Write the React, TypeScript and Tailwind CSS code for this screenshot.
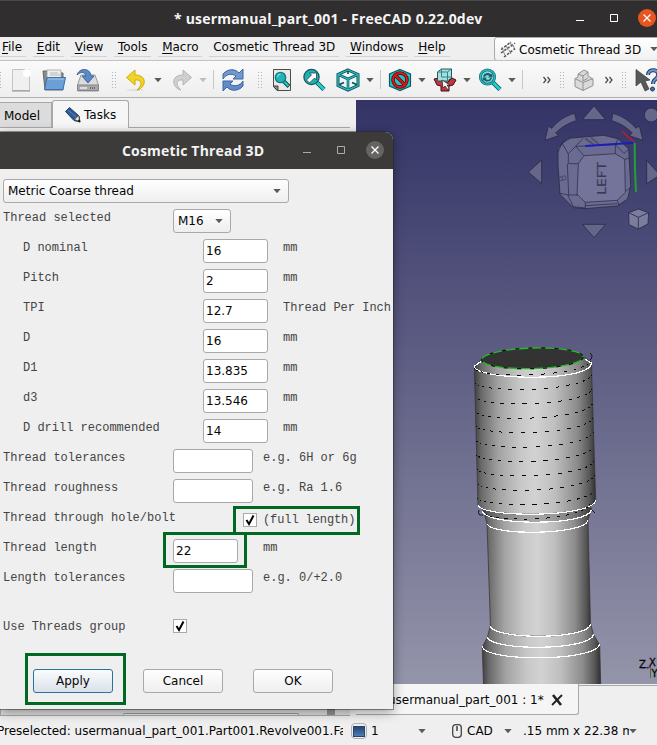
import React from "react";

function Arrow({ className = "", color = "#5a5a5a" }: { className?: string; color?: string }) {
  return (
    <svg className={`h-2 w-2 shrink-0 ${className}`} viewBox="0 0 8 8">
      <path d="M.3 2h7.400L4 6.200z" fill={color} />
    </svg>
  );
}

function Grip({ className = "" }: { className?: string }) {
  const ys = [0, 3, 6, 9, 12, 15];
  return (
    <svg className={`h-4 w-1 shrink-0 ${className}`} viewBox="0 0 4 16" shapeRendering="crispEdges">
      {ys.map((y) => (
        <g key={y} fill="#b4b4b4">
          <rect x="0" y={y} width="1" height="1" />
          <rect x="3" y={y} width="1" height="1" />
        </g>
      ))}
    </svg>
  );
}

function Sep({ className = "" }: { className?: string }) {
  return <div className={`h-[19px] w-px shrink-0 bg-[#c8c8c8] ${className}`} />;
}

function Icon({ className = "", children }: { className?: string; children: React.ReactNode }) {
  return (
    <svg className={`h-6 w-6 shrink-0 ${className}`} viewBox="0 0 24 24">
      {children}
    </svg>
  );
}

function More({ className = "" }: { className?: string }) {
  return (
    <svg className={`h-2 w-2 shrink-0 ${className}`} viewBox="0 0 8 8" fill="none" stroke="#444" strokeWidth="1.2">
      <path d="M.5 1 3 4 .5 7M4.5 1 7 4 4.5 7" />
    </svg>
  );
}

function Toolbar() {
  return (
    <div className="flex h-[38px] items-center overflow-hidden border-b border-t border-b-[#b0b0b0] border-t-[#c2c2c2] bg-linear-to-b from-[#fafafa] to-[#eeeeee] pt-px">
      <div className="w-[9px] shrink-0">
        <Grip className="-ml-[3px]" />
      </div>
      <Icon>
        <path d="M3.5 1.5h17v21h-17z" fill="#f0f0f0" stroke="#c4c4c4" />
        <circle cx="18" cy="5" r="4" fill="#fff" />
        <path d="M3 23h18" stroke="#8d8d8d" />
      </Icon>
      <Icon className="ml-[9px]">
        <path d="M1 3h8l2 2h10v17H3z" fill="#898989" stroke="#666" />
        <path d="M5 2h14v8H5z" fill="#eee" stroke="#999" strokeWidth=".7" />
        <path d="M8 5h8M8 7h10" stroke="#aaa" strokeWidth=".8" />
        <path d="M5 9.5h18.5L21 21.5H2.5z" fill="#6c9fd6" stroke="#3e6fae" />
        <path d="M6 11h16" stroke="#a5c6eb" />
      </Icon>
      <Icon className="ml-[10px]">
        <path d="M5 7h14l3.500 10v6h-21v-6z" fill="#dcdcdc" stroke="#9a9a9a" />
        <path d="M1.500 17h21v5.500h-21z" fill="#a9a9a9" stroke="#858585" />
        <path d="M4 20h7" stroke="#ddd" strokeWidth="2" />
        <path d="M14 20h6" stroke="#666" strokeDasharray="1 1" strokeWidth="2" />
        <path d="M1 7C3 0 14-1 15 8h3l-6 7-6-7h4C9 4 5 3 1 7z" fill="#5a8bc6" stroke="#3a659e" />
      </Icon>
      <Grip className="ml-3" />
      <Icon className="ml-2">
        <path d="M11 2 2.5 9.5 11 17v-5c7-1 8 5 2 10 9-2 11-15-2-15z" fill="#f1d42a" stroke="#d3ae00" />
        <ellipse cx="11" cy="22" rx="9" ry="1.2" fill="#0001" />
      </Icon>
      <Arrow className="ml-[6px]" />
      <Icon className="ml-2">
        <path d="m13 2 8.5 7.5L13 17v-5c-7-1-8 5-2 10C2 20 0 7 13 7z" fill="#cfcfcf" stroke="#b5b5b5" />
      </Icon>
      <Arrow className="ml-[5px]" color="#bdbdbd" />
      <Sep className="ml-[6px]" />
      <Icon className="ml-[7px]">
        <path d="M2 11V6c5-6 13-5 16-1l4-4v10H12l3-3C11 5 5 6 2 11z" fill="#7199cf" stroke="#3c669f" />
        <path d="M22 13v5c-5 6-13 5-16 1l-4 4V13h10l-3 3c4 3 10 2 13-3z" fill="#5f8cc8" stroke="#3c669f" />
      </Icon>
      <Grip className="ml-[13px]" />
      <Icon className="ml-2">
        <path d="M3.500 1.500h17v21H7l-3.500-4z" fill="#e9e9e6" stroke="#4c4c4c" />
        <path d="M3 18h5v5z" fill="#888" stroke="#444" />
        <path d="m13.500 13 5.500 5.500" stroke="#104b50" strokeWidth="4" />
        <path d="m13.500 13 5 5" stroke="#1ccbd0" strokeWidth="2" />
        <circle cx="10.500" cy="9.500" r="5.200" fill="#22b3b8" stroke="#117a80" strokeWidth="1.300" />
        <path d="M7.500 9a3.500 3.500 0 0 1 3-3" fill="none" stroke="#7fe3e6" strokeWidth="1.200" />
      </Icon>
      <Icon className="ml-2">
        <path d="m15 14.500 7 7" stroke="#14555b" strokeWidth="4.500" />
        <path d="m15 14.500 7 7" stroke="#1fd0d5" strokeWidth="2.600" />
        <circle cx="9.500" cy="9" r="7.600" fill="#1fb0b5" stroke="#17585e" strokeWidth="1.300" />
        <path d="m4.500 12 5-5-2-2h7v7l-2-2-5 5z" fill="#fff" stroke="#23464a" strokeWidth=".8" />
      </Icon>
      <Icon className="ml-[10px]">
        <path d="M12 2 22 6.500v11L12 22 2 17.500v-11z" fill="#eef7f7" stroke="#0f4a50" strokeWidth="3" />
        <path d="M2 6.500 12 11l10-4.500M12 11v11" fill="none" stroke="#0f4a50" strokeWidth="2.600" />
        <path d="M12 2v4M2.500 17 8 14.500M21.500 17 16 14.500" stroke="#0f4a50" strokeWidth="1.600" />
        <path d="M12 2 22 6.500v11L12 22 2 17.500v-11zM2 6.500 12 11l10-4.500M12 11v11" fill="none" stroke="#24c3c8" strokeWidth="1.300" />
      </Icon>
      <Arrow className="ml-[6px]" />
      <Sep className="ml-[6px]" />
      <Icon className="ml-[7px]">
        <path d="M12 1.500 22.500 6v12L12 22.500 1.500 18V6z" fill="#1fc3c8" stroke="#155a60" strokeWidth="1.200" />
        <circle cx="12" cy="12" r="7" fill="none" stroke="#4b0808" strokeWidth="3.400" />
        <path d="m7 7 10 10" stroke="#4b0808" strokeWidth="3.400" />
        <circle cx="12" cy="12" r="7" fill="none" stroke="#d81919" strokeWidth="2" />
        <path d="m7 7 10 10" stroke="#d81919" strokeWidth="2" />
      </Icon>
      <Arrow className="ml-[6px]" />
      <Icon className="ml-[7px]">
        <path d="m1 11 5-1 4 4h5l4-4 4 2-3 5-4 1v5H8v-5l-4-1z" fill="#c9343a" stroke="#3a1215" />
        <path d="m4.500 4 4-3h10v9l-4 3h-10z" fill="#a6dfe0" stroke="#235b61" />
        <path d="M4.500 4h10v9M14.500 4l4-3M8.500 1v8h10" fill="none" stroke="#2f8589" />
        <path d="m9 12 1 8 2-2 3 4 1-2-2-3h3z" fill="#f5f5f5" stroke="#303030" strokeWidth=".8" />
      </Icon>
      <Arrow className="ml-[6px]" />
      <Icon className="ml-[7px]">
        <path d="m15 14.500 7 7" stroke="#14555b" strokeWidth="4.500" />
        <path d="m15 14.500 7 7" stroke="#1fd0d5" strokeWidth="2.600" />
        <circle cx="9.500" cy="9" r="7.200" fill="#8fd9db" stroke="#14757b" strokeWidth="2.800" />
        <circle cx="9.500" cy="9" r="7.200" fill="none" stroke="#26bcc1" strokeWidth="1.300" />
        <path d="M5 8.500c1-4 6-4.500 8-2l1.500-1.500v4.500H10l1.500-1.500c-2-1.500-4-1-4.500 1zM14 10c-1 4-6 4.500-8 2l-1.300 1.300V9.500H9L7.700 11c2 1.500 4 1 4.500-1z" fill="#13646a" />
      </Icon>
      <Arrow className="ml-[6px]" />
      <Sep className="ml-[6px]" />
      <More className="ml-5" />
      <Grip className="ml-[9px]" />
      <Icon className="ml-2">
        <path d="M3 10.500v8L11 22.500l10-5V11l-5-3V4l-4-2-6 4v3z" fill="#dadada" stroke="#909090" />
        <path d="m6 6 5 2 5-4M11 8v5M11 13l5-3M3 10.500l8 4 10-4M11 14.500v8" fill="none" stroke="#909090" />
      </Icon>
      <More className="ml-[9px]" />
      <Grip className="ml-[9px]" />
      <Icon className="ml-[9px]">
        <path d="M1 1.500 15 12l-5 1 4 8-4 2-4-9-5 4z" fill="#555a58" stroke="#363b39" strokeWidth=".7" />
        <path d="M13 7c0-7 12-6 10 1-1.500 4-5 3-5 8" fill="none" stroke="#1f3c6b" strokeWidth="4" />
        <path d="M13 7c0-7 12-6 10 1-1.500 4-5 3-5 8" fill="none" stroke="#6f97cf" strokeWidth="2" />
        <circle cx="17.500" cy="21" r="2" fill="#426ca8" stroke="#1f3c6b" />
      </Icon>
    </div>
  );
}

const menus = ["File", "Edit", "View", "Tools", "Macro", "Cosmetic Thread 3D", "Windows", "Help"];

function MenuBar() {
  return (
    <div className="flex h-[23px] overflow-hidden bg-[#efefef]">
      <div className="-ml-0.5 flex h-5 w-[497px] shrink-0 gap-[6.7px]">
        {menus.map((m) => (
          <div key={m} className="whitespace-nowrap border-b border-[#d2d2d2] px-1 leading-5">
            {m.startsWith("Cos") ? m : (
              <>
                <span className="underline decoration-1 underline-offset-2">{m[0]}</span>
                {m.slice(1)}
              </>
            )}
          </div>
        ))}
      </div>
      <div className="-ml-px flex h-6 w-[180px] shrink-0 items-center rounded-[3px] border border-[#a9a9a9] bg-linear-to-b from-white to-[#f1f1f1] pl-[5px] whitespace-nowrap">
        <svg className="mr-[3px] h-[17px] w-4" viewBox="0 0 16 17" fill="none" stroke="#565656">
          <path d="M1 8.500 11 1M1 12 15 2M4 16 15 7.500" strokeDasharray="2.500 1.500" strokeWidth="1.500" />
          <path d="m2 6 2 6m2-8 2 5m2-8 2 5M4 12l2 4m3-7 2 4m2-9 2 5" strokeWidth=".7" />
        </svg>
        <span className="pt-px">Cosmetic Thread 3D</span>
        <Arrow className="ml-[9px]" />
      </div>
    </div>
  );
}

function helixPath() {
  const out: string[] = [];
  for (let turn = 0; turn < 11; turn++) {
    const cx = 533 + turn * 0.35;
    const y0 = 368 + turn * 14.4;
    const r = turn === 10 ? 53 : 58.5;
    for (let a = 0.05 + (turn % 3) * 0.04; a < 3.1; a += 0.208) {
      const pt = (t: number) =>
        `${(cx - r * Math.cos(t)).toFixed(1)} ${(y0 + 11 * Math.sin(t) - 8.5 * (t / Math.PI)).toFixed(1)}`;
      out.push(`M${pt(a)}L${pt(Math.min(a + 0.072, 3.14))}`);
    }
  }
  return out.join("");
}

function Viewport() {
  return (
    <svg className="block h-[584px] w-[301px]" viewBox="356 100 301 584">
      <defs>
        <linearGradient id="sky" x1="0" y1="0" x2="0" y2="1">
          <stop offset="0" stopColor="#333366" />
          <stop offset="1" stopColor="#9494aa" />
        </linearGradient>
        <linearGradient id="metal">
          <stop offset="0" stopColor="#3f3f3f" />
          <stop offset=".06" stopColor="#6b6b6b" />
          <stop offset=".2" stopColor="#a3a3a3" />
          <stop offset=".38" stopColor="#c8c8c8" />
          <stop offset=".5" stopColor="#d2d2d2" />
          <stop offset=".66" stopColor="#bfbfbf" />
          <stop offset=".85" stopColor="#8b8b8b" />
          <stop offset=".95" stopColor="#565656" />
          <stop offset="1" stopColor="#303030" />
        </linearGradient>
      </defs>
      <rect x="356" y="100" width="301" height="584" fill="url(#sky)" />

      <g transform="translate(510 95) scale(.33333)" stroke="#292944" strokeWidth="2.500" fill="#66668b" strokeLinejoin="round">
        <path d="m252 33 35 41h-70zM252 428l35-40h-70zM55 231l40-36v71zM450 240l-40-44v70z" />
        <path d="M194 55c-28 7-52 24-69 45l-10-7-10 43 41-14-9-8c18-18 36-29 62-37zM308 55c28 7 52 24 70 45l10-7 11 43-41-14 9-8c-18-18-36-29-62-37z" />
        <circle cx="424" cy="60" r="21" />
        <path d="M144 160 173 130 281 121 324 131 356 162 362 272 353 312 322 333 225 341 190 338 150 298 144 210z" fill="#6b6b91" />
        <path d="M222 181 316 176 344 193 346 292 322 316 226 322 201 303 205 206z" fill="#74749a" stroke="none" />
        <path
          d="M222 182 316 176M205 206 201 303M344 193 346 290M226 322 322 316M175 206h30l17-24-25-28-22 22zM172 206l4 94h27l23 22v17l-36-4-17-35M144 172l12-28 19 33M197 154l22-24M156 144l25-14M197 154l119-5 26 26M316 149v27l28 17 14-4M324 131l-8 18M346 290l15-12M346 292l-24 24 5 16M226 332l96-6M176 300l-26-5M342 175l14-12"
          fill="none"
          strokeWidth="2.200"
        />
        <text x="0" y="0" transform="translate(288 299) rotate(-90)" className="font-['DejaVu_Sans'] text-[38px]" fill="#3a3a56" stroke="#3a3a56" strokeWidth=".5" textLength="98" lengthAdjust="spacingAndGlyphs">LEFT</text>
        <text x="0" y="0" transform="translate(168 258) rotate(-90) skewX(12)" className="font-['DejaVu_Sans'] text-[30px]" fill="#484866" stroke="none">B</text>
        <path d="m226 130 25 19M242 127l24 20" stroke="#50506d" strokeWidth="6" />
        <path d="m356 353 29-11 31 11-2 34-29 15-28-13z" fill="#7c7c9e" />
        <path d="m356 353 29 14 31-14M385 367v34" fill="none" />
        <g fill="none">
          <path d="m226 153 146-10" stroke="#1d1dba" strokeWidth="6" />
          <path d="m336 109 36 32" stroke="#b51d31" strokeWidth="5" />
          <path d="m374 143 1 80 3 68" stroke="#23a033" strokeWidth="6" />
        </g>
      </g>

      <path d="M482.500 508 487 523 490.500 627 494 640H588L590.500 625 588 520 591.500 508z" fill="url(#metal)" stroke="#383838" strokeWidth=".8" />
      <path d="M482.500 508V511.500C488 526 587 526 591.500 510V504z" fill="#3334" />
      <path d="M490.300 626 487.300 637.500 482.300 647 483.500 685h117.200l-1-40-6.200-10.500L590.700 624C588 640 494 640 490.300 626z" fill="url(#metal)" stroke="#383838" strokeWidth=".8" />
      <path d="M481.500 359 474.500 366v9l3.500 130C481 518 592 518 595.700 500.500l-4-128v-10l-7-5z" fill="url(#metal)" stroke="#383838" strokeWidth=".8" />
      <ellipse cx="532.500" cy="358.300" rx="50.800" ry="10.300" transform="rotate(-1.600 533 358)" fill="#333" stroke="#28b828" strokeWidth="1.300" />
      <ellipse cx="532.500" cy="358.300" rx="50.800" ry="10.300" transform="rotate(-1.600 533 358)" fill="none" stroke="#111" strokeWidth="1.300" strokeDasharray="4 9" />
      <g fill="none" stroke="#fff" strokeWidth="1.200" shapeRendering="crispEdges">
        <path d="M481 361.500l-6.500 4.500C473 380 590 383 591.500 363l-6-3.500" />
        <path d="M478 505C481 518 592 518 595.700 500.500" />
        <path d="M482.500 511.500C488 526 587 526 591.500 510" />
        <path d="M487 524C492 536 584 535 588 520.500" />
        <path d="M490.300 626C494 640 588 640 590.700 624" />
        <path d="M487.300 637.500C492 651 590 651 593.500 634.500" />
        <path d="M482.300 646.500C485 662 596 662 599.800 644" />
      </g>
      <path d={helixPath()} stroke="#080808" strokeWidth="1" fill="none" shapeRendering="crispEdges" />
      <path d="M590 353q4 3 0 7M479 510q-2 6 4 5M592 510l3 3" fill="none" stroke="#111" />

      <g className="font-['DejaVu_Sans'] text-[10px]" fill="#050505" stroke="#050505" strokeWidth=".3">
        <path d="m642 668 9-1" stroke="#2626a8" strokeWidth="1" />
        <path d="M650.500 668v10" stroke="#1e8b30" strokeWidth="1" />
        <path d="m647 669 4-3" stroke="#a22" strokeWidth="1" />
        <text x="639" y="668">Z</text>
        <text x="649" y="666">X</text>
        <text x="651.500" y="677">Y</text>
      </g>
    </svg>
  );
}

function Field({ value = "", className }: { value?: string; className: string }) {
  return (
    <div className={`flex h-6 shrink-0 items-center rounded-[3px] border border-[#a9a9a9] bg-white pl-0.5 ${className}`}>{value}</div>
  );
}

function Mono({ children, className = "-top-[3px]" }: { children: React.ReactNode; className?: string }) {
  return (
    <span className={`relative whitespace-pre font-['Liberation_Mono',monospace] text-[12px] text-[#444] ${className}`}>
      {children}
    </span>
  );
}

function Check() {
  return (
    <div className="flex h-3.5 w-3.5 shrink-0 items-center justify-center border border-[#aaa] bg-white">
      <svg className="h-3 w-3" viewBox="0 0 12 12" fill="none" stroke="#000" strokeWidth="2">
        <path d="m2.500 6 2.500 4L9.500 1.500" />
      </svg>
    </div>
  );
}

const dims: [string, string, string][] = [
  ["D nominal", "16", "mm"],
  ["Pitch", "2", "mm"],
  ["TPI", "12.7", "Thread Per Inch"],
  ["D", "16", "mm"],
  ["D1", "13.835", "mm"],
  ["d3", "13.546", "mm"],
  ["D drill recommended", "14", "mm"],
];

const specs: [string, string][] = [
  ["Thread tolerances", "e.g. 6H or 6g"],
  ["Thread roughness", "e.g. Ra 1.6"],
];

function Row({ label, hint }: { label: string; hint: string }) {
  return (
    <div className="flex h-[30px] items-center">
      <Mono className="-top-[3px] w-[170px]">{label}</Mono>
      <Field className="w-20" />
      <Mono className="-top-[3px] ml-2.5">{hint}</Mono>
    </div>
  );
}

function Button({ label, primary = false }: { label: string; primary?: boolean }) {
  return (
    <div
      className={`flex h-6 w-20 items-center justify-center rounded-[3px] border bg-linear-to-b ${
        primary ? "border-[#2d71a0] from-[#fafcfd] to-[#d9e1e9]" : "border-[#a9a9a9] from-white to-[#eeeeee]"
      }`}
    >
      {label}
    </div>
  );
}

function Dialog() {
  return (
    <div className="absolute top-[132px] left-0 h-[577px] w-[393px] overflow-hidden rounded-tr-lg bg-[#efefef] shadow-[0_3px_12px_rgba(0,0,0,0.4),0_0_0_1px_rgba(40,40,40,0.45)]">
      <div className="flex h-[37px] items-center bg-[#3d3b39]">
        <div className="w-[300px] pl-[122px] font-['Open_Sans',sans-serif] text-[14px] font-bold tracking-[0.18px] whitespace-nowrap text-[#f3f3f3]">
          Cosmetic Thread 3D
        </div>
        <svg className="-mt-0.5 h-9 w-[90px]" viewBox="0 0 90 36" fill="none" stroke="#aaa">
          <path d="M3 20.500h8M37.500 14.500h7v7h-7z" />
          <circle cx="75" cy="18" r="9" fill="#656462" stroke="none" />
          <path d="m71.500 14.500 7 7m0-7-7 7" stroke="#fff" strokeWidth="1.300" />
        </svg>
      </div>
      <div className="pl-[3px]">
        <div className="mt-[10px] flex h-6 w-[286px] items-center justify-between rounded-[3px] border border-[#a9a9a9] bg-linear-to-b from-white to-[#eeeeee] pr-[7px] pl-1">
          Metric Coarse thread
          <Arrow />
        </div>
        <div className="mt-[3px] flex h-[30px] items-center">
          <Mono className="-top-[3px] w-[170px]">Thread selected</Mono>
          <div className="flex h-6 w-[58px] items-center justify-between rounded-[3px] border border-[#a9a9a9] bg-linear-to-b from-white to-[#eeeeee] pr-[7px] pl-1">
            M16
            <Arrow />
          </div>
        </div>
        {dims.map(([label, value, unit]) => (
          <div key={label} className="flex h-[30px] items-center pl-5">
            <Mono className="-top-[3px] w-[180px]">{label}</Mono>
            <Field value={value} className="w-[65px]" />
            <Mono className="-top-[3px] ml-[15px]">{unit}</Mono>
          </div>
        ))}
        {specs.map(([label, hint]) => (
          <Row key={label} label={label} hint={hint} />
        ))}
        <div className="flex h-[30px] items-center">
          <Mono className="-top-[3px] w-[230px]">Thread through hole/bolt</Mono>
          <div className="-mt-[2px] flex h-[29px] w-[127px] items-center border-[3px] border-[#006820] pl-[7px]">
            <Check />
            <Mono className="top-0 ml-[6px] tracking-[-0.1px]">(full length)</Mono>
          </div>
        </div>
        <div className="flex h-[30px] items-center">
          <Mono className="-top-[3px] w-[160px]">Thread length</Mono>
          <div className="z-10 -mt-[10px] -mb-2 flex h-9 w-[84px] items-center border-[3px] border-[#006820] pt-0.5 pl-[7px]">
            <Field value="22" className="w-[65px]" />
          </div>
          <Mono className="-top-[3px] ml-4">mm</Mono>
        </div>
        <Row label="Length tolerances" hint="e.g. 0/+2.0" />
        <div className="mt-[15px] flex h-[30px] items-center">
          <Mono className="top-px w-[170px]">Use Threads group</Mono>
          <Check />
        </div>
        <div className="mt-[11px] ml-[22px] flex h-[54px] items-center">
          <div className="flex h-[52px] w-[101px] items-center border-[3px] border-[#006820] pt-1 pl-[5px]">
            <Button label="Apply" primary />
          </div>
          <div className="mt-1 ml-[17px] flex gap-[30px]">
            <Button label="Cancel" />
            <Button label="OK" />
          </div>
        </div>
      </div>
    </div>
  );
}

function SidePanel() {
  return (
    <div className="flex w-[356px] shrink-0 flex-col bg-[#efefef]">
      <div className="flex h-7 items-end">
        <div className="flex h-[26px] w-[52px] items-center border border-l-0 border-[#a8a8a8] bg-[#dcdcdc] pt-0.5 pl-1">Model</div>
        <div className="flex h-7 w-[77px] items-center rounded-t-[3px] border border-b-0 border-[#a8a8a8] bg-[#f6f6f6] pl-3">
          <svg className="mr-[3px] h-4 w-4" viewBox="0 0 16 16">
            <path d="m.5 4.500 4-4 9.500 8.500 1 6-6-1.500z" fill="#2f5b90" stroke="#1b3e69" />
            <path d="m3 3 9 8" stroke="#5a88ba" />
            <path d="m9.500 12.500 4-4L15 15z" fill="#e9dcc9" stroke="#333" strokeWidth=".5" />
            <path d="m12.500 14 2-2 .8 3.300z" fill="#111" />
          </svg>
          Tasks
        </div>
        <div className="h-px w-[221px] bg-[#ababab]" />
      </div>
      <div className="flex h-[5px] w-[350px] items-end justify-end gap-[15px] pr-1">
        <div className="h-px w-[11px] bg-[#777]" />
        <div className="h-px w-2 bg-[#777]" />
      </div>
      <div className="flex-1" />
      <div className="flex h-2 w-[350px] items-end border-b border-l border-[#a8a8a8] bg-[#dedede] pl-[122px]">
        <div className="h-0.5 w-44 rounded-t border border-b-0 border-[#999] bg-[#eee]" />
        <div className="ml-7 h-2 w-2 bg-[#929292]" />
      </div>
    </div>
  );
}

export default function App() {
  return (
    <div className="relative flex h-[745px] w-[657px] flex-col overflow-hidden bg-[#efefef] font-['DejaVu_Sans',sans-serif] text-[12px] leading-[14px] text-[#050505]">
      <div className="flex h-[37px] shrink-0 items-center border-t border-[#4c4a4a] bg-[#302e2e]">
        <div className="w-[570px] pl-[174px] font-['Open_Sans',sans-serif] text-[14px] font-bold tracking-[0.19px] whitespace-nowrap text-[#f5f5f5]">
          * usermanual_part_001 - FreeCAD 0.22.0dev
        </div>
        <svg className="h-9 w-[87px]" viewBox="0 0 87 36" fill="none" stroke="#fff">
          <path d="M6 19.500h8M40.500 13.500h7v7h-7z" />
          <circle cx="77" cy="17" r="9" fill="#e95420" stroke="none" />
          <path d="m73.500 13.500 7 7m0-7-7 7" strokeWidth="1.300" />
        </svg>
      </div>
      <MenuBar />
      <div className="shrink-0">
        <Toolbar />
      </div>
      <div className="mt-px flex h-[617px] shrink-0">
        <div className="flex pt-px">
          <SidePanel />
        </div>
        <div className="flex flex-col pt-px">
          <Viewport />
          <div className="flex h-[31px]">
            <div className="flex h-[31px] w-[223px] items-center rounded-br-[3px] border-r border-b border-[#a8a8a8] bg-[#f5f5f5] pt-0.5 pl-[32px] whitespace-nowrap">
              usermanual_part_001 : 1*
              <svg className="ml-[7px] h-3 w-3 shrink-0" viewBox="0 0 12 12" fill="none" stroke="#222">
                <path d="m2 1 8 10" strokeWidth="2.600" />
                <path d="m11 1-10 10" strokeWidth="1.800" />
              </svg>
            </div>
            <div className="mt-px h-px w-[78px] bg-[#a8a8a8]" />
          </div>
        </div>
      </div>
      <div className="flex h-[29px] shrink-0 items-center overflow-hidden pt-px whitespace-nowrap">
        <div className="w-[349px] shrink-0 overflow-hidden">
          <div className="-ml-[3px] w-[346px] overflow-hidden">Preselected: usermanual_part_001.Part001.Revolve001.Face</div>
        </div>
        <div className="ml-0.5 flex h-4 w-4 items-center justify-center rounded-sm border border-[#b0b0b0] bg-[#eee]">
          <div className="h-[11px] w-3 border border-[#24466f] bg-linear-to-b from-[#24466f] to-[#4b80b7]" />
        </div>
        <span className="ml-1 w-[46px]">1</span>
        <Arrow className="ml-px" />
        <svg className="ml-[26px] h-[14px] w-2.5" viewBox="0 0 10 14" fill="none" stroke="#444">
          <rect x=".7" y=".7" width="8.600" height="12.600" rx="3" strokeWidth="1.300" />
          <path d="M5 2v5" strokeWidth="1.500" />
        </svg>
        <span className="ml-[5px] w-9">CAD</span>
        <Arrow className="ml-px" />
        <div className="ml-[11px] w-[106px] overflow-hidden">.15 mm x 22.38 mm</div>
        <Arrow />
      </div>
      <Dialog />
    </div>
  );
}
